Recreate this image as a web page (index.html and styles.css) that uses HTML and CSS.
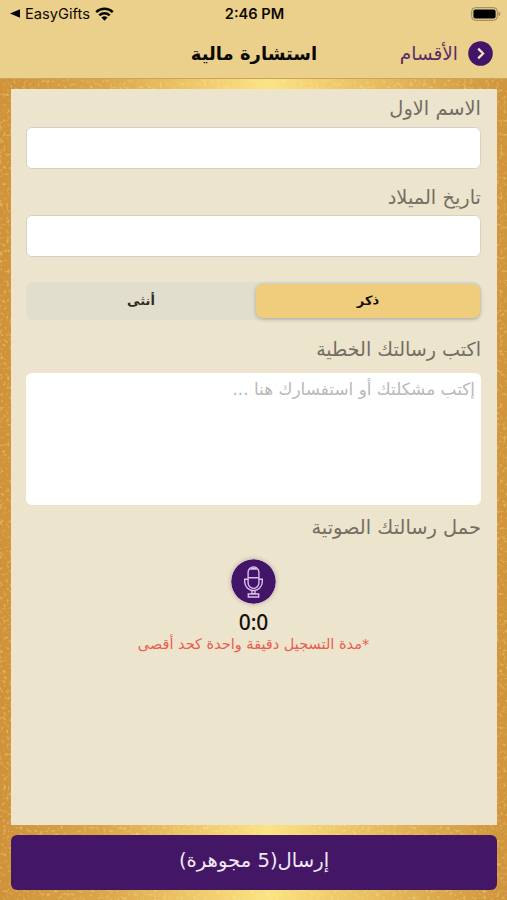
FILE: index.html
```html
<!DOCTYPE html>
<html lang="ar" dir="rtl">
<head>
  <meta charset="UTF-8">
  <title>استشارة مالية</title>
  <meta name="viewport" content="width=device-width, initial-scale=1.0">
  <link rel="stylesheet" href="styles.css">
</head>
<body>
  <svg class="grain" width="507" height="900" aria-hidden="true">
    <filter id="speckle" x="0" y="0" width="100%" height="100%">
      <feTurbulence type="fractalNoise" baseFrequency="0.3" numOctaves="4" seed="8"/>
      <feColorMatrix values="0 0 0 0 1  0 0 0 0 0.86  0 0 0 0 0.5  4 0 0 0 -2.2"/>
    </filter>
    <rect width="507" height="900" filter="url(#speckle)"/>
  </svg>

  <header class="topbar">
    <div class="status" dir="ltr">
      <div class="status-left">
        <svg width="10" height="9" viewBox="0 0 10 9"><path d="M0 4.5 10 0.2v8.6z"/></svg>
        <span class="app-name">EasyGifts</span>
        <svg class="wifi" width="19" height="14" viewBox="0 0 19 14">
          <path d="M1.2 5.2a12 12 0 0 1 16.6 0M4.3 8.4a7.4 7.4 0 0 1 10.4 0" fill="none" stroke="#0b0905" stroke-width="2.5"/>
          <path d="M6.5 10.6a4.3 4.3 0 0 1 6 0l-3 3.1z"/>
        </svg>
      </div>
      <div class="time">2:46 PM</div>
      <div class="battery">
        <svg width="30" height="14" viewBox="0 0 30 14">
          <rect x="0.7" y="0.7" width="25.6" height="12.6" rx="3.6" fill="none" stroke="#94835a"/>
          <rect x="2.4" y="2.4" width="22.2" height="9.2" rx="2"/>
          <path d="M27.7 4.8c2 .7 2 3.7 0 4.4z" fill="#94835a"/>
        </svg>
      </div>
    </div>
    <nav class="nav">
      <a class="back" href="#">
        <svg width="25" height="25" viewBox="0 0 25 25">
          <circle cx="12.5" cy="12.5" r="12.3" fill="#431568"/>
          <path d="M10.2 7.6l4.9 4.9-4.9 4.9" fill="none" stroke="#f6e7cf" stroke-width="2.2"/>
        </svg>
        <span>الأقسام</span>
      </a>
      <h1 class="title">استشارة مالية</h1>
    </nav>
  </header>

  <form class="card">
    <label class="label" for="name">الاسم الاول</label>
    <input class="field" type="text" id="name">

    <label class="label label-birth" for="birth">تاريخ الميلاد</label>
    <input class="field" type="text" id="birth">

    <div class="segment">
      <button type="button" class="seg active">ذكر</button>
      <button type="button" class="seg">أنثى</button>
    </div>

    <label class="label label-message" for="message">اكتب رسالتك الخطية</label>
    <textarea class="message" id="message" placeholder="إكتب مشكلتك أو استفسارك هنا ..."></textarea>

    <div class="label label-voice">حمل رسالتك الصوتية</div>
    <div class="recorder">
      <svg class="mic" width="45" height="45" viewBox="0 0 45 45">
        <circle cx="22.5" cy="22.5" r="22.3" fill="#431568"/>
        <g fill="none" stroke="#dcc0ec" stroke-width="1.4">
          <path d="M17.1 18v-4.7a5.4 5.4 0 0 1 10.8 0V24a5.4 5.4 0 0 1-10.8 0z"/>
          <path d="M17.1 18.8h10.8"/>
          <path d="M17.1 20.3h-3.4v2.4a8.8 8.8 0 0 0 17.6 0v-2.4h-3.4"/>
          <path d="M21 31.5v3.3h3v-3.3M17.3 38v-3h10.4v3z"/>
        </g>
        <path d="M18.6 10.8a4.2 4.2 0 0 1 7.8 0z" fill="#dcc0ec"/>
      </svg>
      <div class="timer" dir="ltr">0:0</div>
      <p class="hint">*مدة التسجيل دقيقة واحدة كحد أقصى</p>
    </div>
  </form>

  <button type="button" class="send">إرسال(5 مجوهرة)</button>
</body>
</html>
```

FILE: styles.css
```css
* {
  box-sizing: border-box;
}
body {
  margin: 0;
  height: 900px;
  display: flex;
  flex-direction: column;
  overflow: hidden;
  font-family: "DejaVu Sans", sans-serif;
  background: linear-gradient(90deg, #cf9239 0%, #daa548 20%, #f2cf70 42%, #fbe382 53%, #efca6b 66%, #dba94d 86%, #d0943b 100%);
}
.grain {
  position: absolute;
  inset: 0;
  opacity: 0.35;
  z-index: -1;
}
.topbar {
  flex: none;
  height: 79px;
  background: #ebd08b;
  border-bottom: 1px solid #c9a45a;
}
.status {
  height: 27px;
  padding: 0 6px 0 10px;
  display: grid;
  grid-template-columns: 1fr auto 1fr;
  align-items: center;
  font-family: Inter, sans-serif;
  color: #0b0905;
}
.status-left {
  display: flex;
  align-items: center;
  gap: 5px;
}
.app-name {
  font-size: 14.7px;
}
.time {
  margin-right: 2px;
  font-size: 14.6px;
  font-weight: 600;
}
.battery {
  display: flex;
  justify-content: flex-end;
}
.nav {
  height: 52px;
  padding: 0 14px 0 15px;
  display: grid;
  grid-template-columns: 1fr auto 1fr;
  align-items: center;
}
.back {
  display: flex;
  align-items: center;
  gap: 10px;
  color: #5a2b69;
  font-size: 18.5px;
  text-decoration: none;
}
.title {
  margin: 0;
  font-size: 18px;
  color: #0b0905;
}
.card {
  flex: none;
  height: 736px;
  margin: 10px 10px 0 11px;
  padding: 0 16px 0 15px;
  background: #ece4cc;
}
.label {
  display: flex;
  align-items: center;
  height: 38px;
  color: #746e64;
  font-size: 19.4px;
  white-space: nowrap;
}
.label-birth {
  height: 36px;
  margin-top: 10px;
}
.field {
  display: block;
  width: 100%;
  height: 42px;
  padding: 0 8px;
  border: 1px solid #d6d2ca;
  border-radius: 6px;
  background: #fff;
  font: inherit;
}
.segment {
  display: flex;
  height: 38px;
  margin-top: 25px;
  padding: 2px 1px 2px 0;
  border-radius: 8px;
  background: #e1dece;
}
.seg {
  flex: none;
  width: 230px;
  padding: 0 0 2px;
  border: none;
  border-radius: 7px;
  background: none;
  font-family: inherit;
  font-size: 13px;
  font-weight: bold;
  color: #30291f;
}
.seg.active {
  width: 224px;
  background: #efcd7d;
  color: #16100a;
  box-shadow: 0 1px 4px rgba(0,0,0,0.25);
}
.label-message {
  height: 37px;
  margin-top: 11px;
  margin-bottom: 5px;
  font-size: 19.1px;
}
.message {
  display: block;
  width: 100%;
  height: 132px;
  padding: 6px 6px;
  border: none;
  border-radius: 6px;
  background: #fff;
  font-family: inherit;
  font-size: 16.9px;
  resize: none;
}
.message::placeholder {
  color: #b9b9b9;
}
.label-voice {
  height: 45px;
  font-size: 19.4px;
}
.recorder {
  display: flex;
  flex-direction: column;
  align-items: center;
  padding-top: 9px;
}
.mic {
  border-radius: 50%;
  box-shadow: 0 0 4px rgba(67,21,104,0.3);
}
.timer {
  margin-top: 6px;
  font-family: "Noto Sans", sans-serif;
  font-size: 21px;
  font-weight: 500;
  line-height: 24px;
  color: #16120b;
}
.hint {
  margin: 0;
  font-size: 14.5px;
  line-height: 20px;
  color: #ea5c4e;
  white-space: nowrap;
}
.send {
  flex: none;
  height: 55px;
  margin: 10px 10px 0 11px;
  padding: 0 0 4px;
  border: none;
  border-radius: 6px;
  background: #431765;
  color: #f4e9f8;
  font-family: inherit;
  font-size: 19.6px;
}
```
